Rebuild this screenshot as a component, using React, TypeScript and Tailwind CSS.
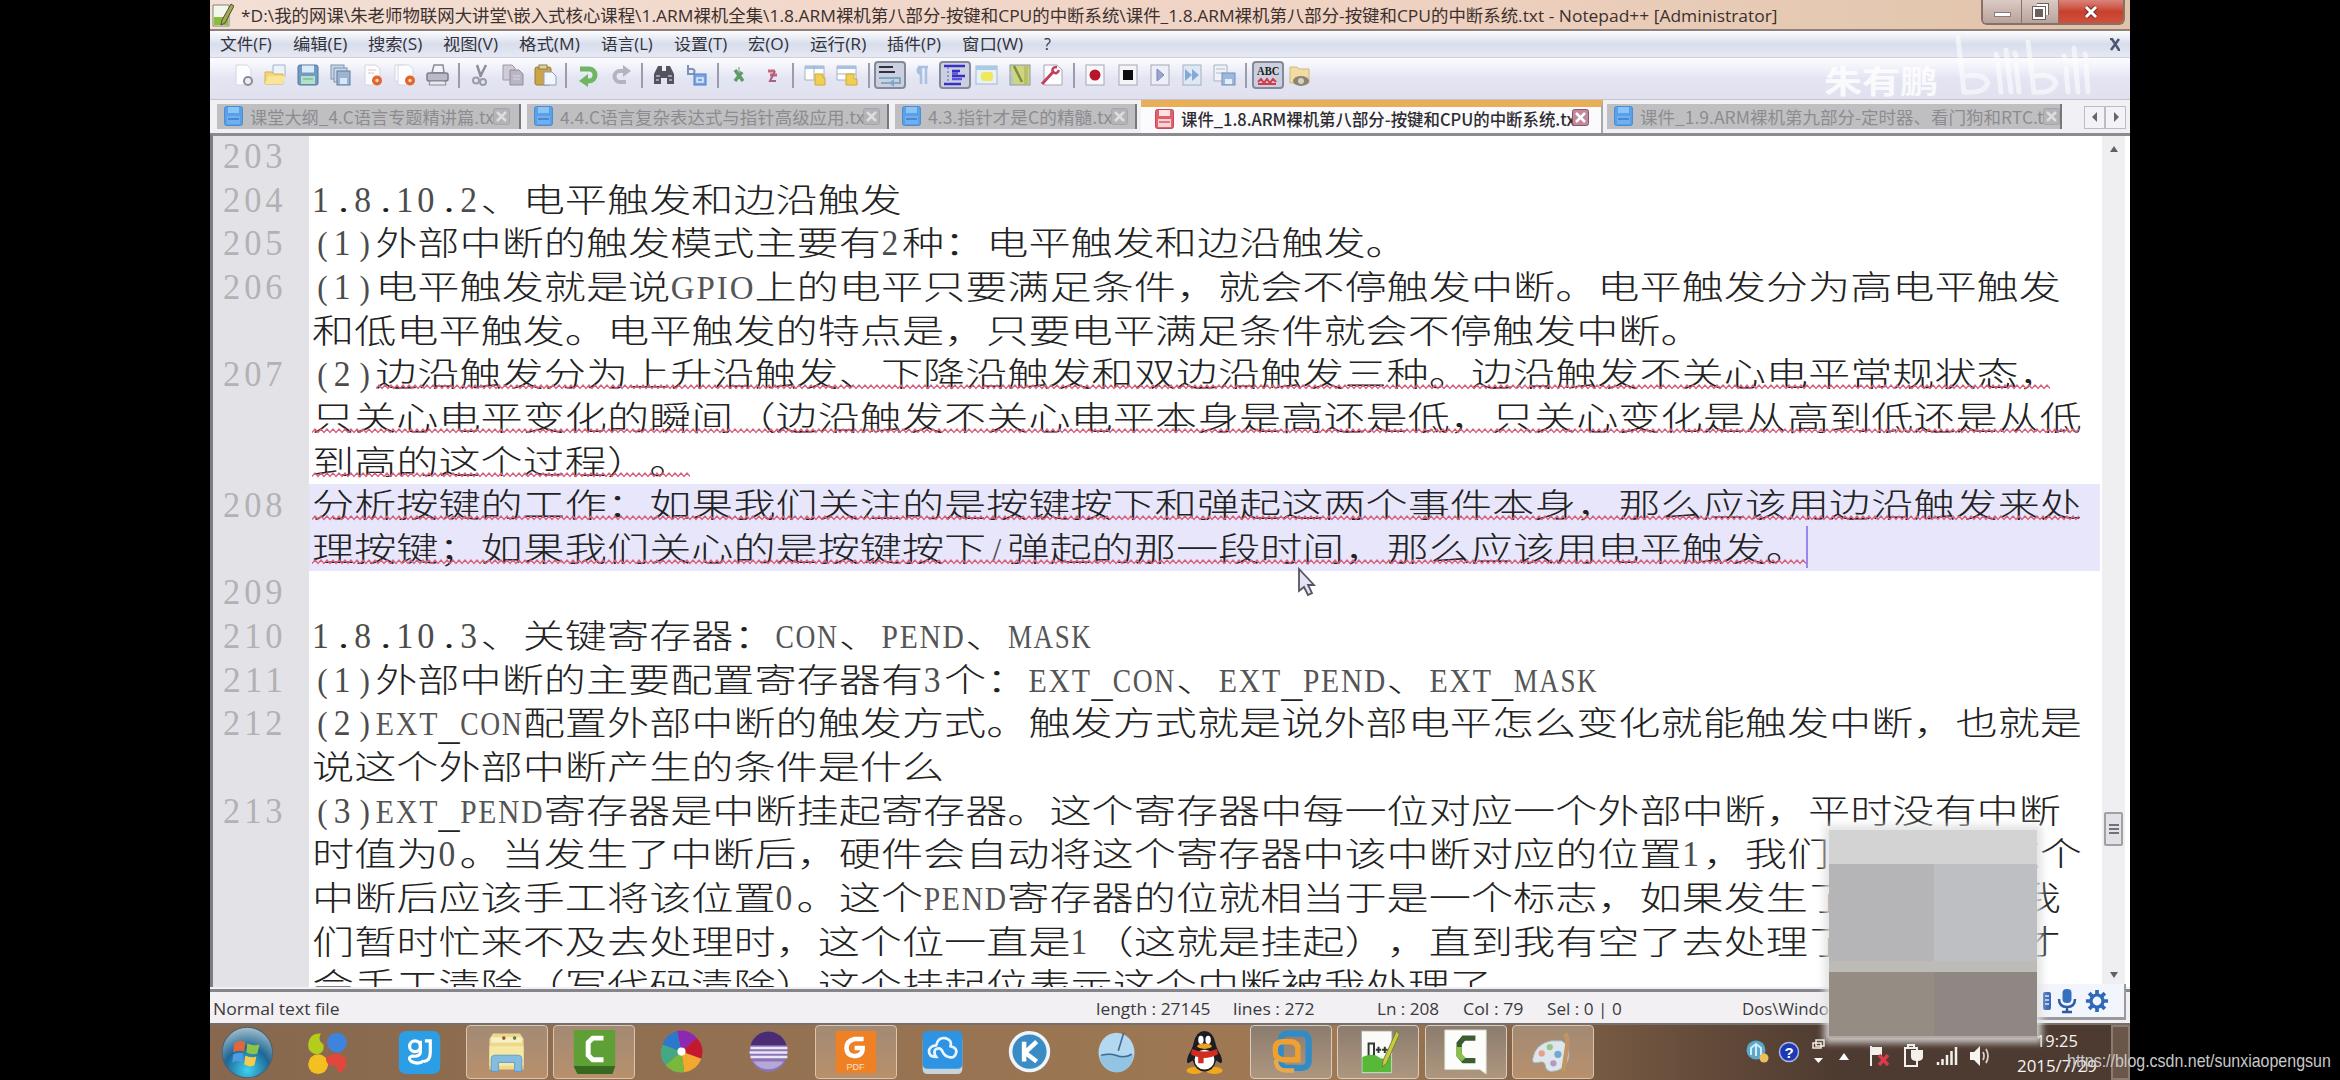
import { useLayoutEffect, useRef, type ReactNode } from "react";

/** Single-line text squeezed or stretched to an exact width. */
function Fit({ w, children, className = "" }: { w: number; children: ReactNode; className?: string }) {
  const inner = useRef<HTMLSpanElement>(null);
  useLayoutEffect(() => {
    const el = inner.current;
    if (el && el.offsetWidth) el.style.transform = `scaleX(${w / el.offsetWidth})`;
  }, [w]);
  return (
    <span className={`inline-block whitespace-nowrap ${className}`} style={{ width: w }}>
      <span ref={inner} className="inline-block origin-left whitespace-nowrap">{children}</span>
    </span>
  );
}

const HALF = 16.5;

/** Text on a fixed grid: ideographs take two cells, latin glyphs one. */
function CodeText({ text }: { text: string }) {
  const parts = text.match(/[A-Z]+|[0-9]+|[().\/_]|[^A-Z0-9().\/_]+/g) ?? [];
  return (
    <>
      {parts.map((p, i) => {
        if (/^[A-Z]+$/.test(p))
          return (
            <Fit key={i} w={HALF * p.length} className="font-['Liberation_Serif',serif] text-[34px] tracking-[2px] text-[#555]">{p}</Fit>
          );
        if (/^[0-9]+$/.test(p))
          return (
            <Fit key={i} w={HALF * p.length} className="font-['Liberation_Serif',serif] text-[35px] tracking-[4px] text-[#4c4c4c]">{p}</Fit>
          );
        if (p === "_")
          return (
            <span key={i} className="relative top-[5px] inline-block w-[16.5px] text-center font-['Liberation_Serif',serif] text-[33px]">{p}</span>
          );
        if (p === ".")
          return (
            <span key={i} className="inline-block w-[16.5px] text-center font-['Liberation_Serif',serif] text-[33px]">{p}</span>
          );
        if (/^[()\/]$/.test(p))
          return (
            <span key={i} className="inline-block w-[16.5px] scale-x-[.72] text-center font-['Liberation_Serif',serif] text-[34px] text-[#4c4c4c]">{p}</span>
          );
        return <span key={i}>{p}</span>;
      })}
    </>
  );
}

function Wave({ w }: { w: number }) {
  const pts: string[] = [];
  for (let x = 0, k = 0; x <= w; x += 3, k++) pts.push(`${x},${k % 2 ? 1 : 4.5}`);
  return (
    <svg className="absolute top-[33px] left-0 h-[6px]" width={w} height="6">
      <polyline points={pts.join(" ")} fill="none" stroke="#d4607c" strokeWidth="1.2" />
    </svg>
  );
}

type Row = { n?: number; t: string; hl?: boolean; wave?: [number, number]; caret?: number };
const rows: Row[] = [
  { n: 203, t: "" },
  { n: 204, t: "1.8.10.2、电平触发和边沿触发" },
  { n: 205, t: "(1)外部中断的触发模式主要有2种：电平触发和边沿触发。" },
  { n: 206, t: "(1)电平触发就是说GPIO上的电平只要满足条件，就会不停触发中断。电平触发分为高电平触发" },
  { t: "和低电平触发。电平触发的特点是，只要电平满足条件就会不停触发中断。" },
  { n: 207, t: "(2)边沿触发分为上升沿触发、下降沿触发和双边沿触发三种。边沿触发不关心电平常规状态，", wave: [64, 1740] },
  { t: "只关心电平变化的瞬间（边沿触发不关心电平本身是高还是低，只关心变化是从高到低还是从低", wave: [0, 1769] },
  { t: "到高的这个过程）。", wave: [0, 378] },
  { n: 208, t: "分析按键的工作：如果我们关注的是按键按下和弹起这两个事件本身，那么应该用边沿触发来处", hl: true, wave: [0, 1769] },
  { t: "理按键；如果我们关心的是按键按下/弹起的那一段时间，那么应该用电平触发。", hl: true, wave: [0, 1494], caret: 1494 },
  { n: 209, t: "" },
  { n: 210, t: "1.8.10.3、关键寄存器：CON、PEND、MASK" },
  { n: 211, t: "(1)外部中断的主要配置寄存器有3个：EXT_CON、EXT_PEND、EXT_MASK" },
  { n: 212, t: "(2)EXT_CON配置外部中断的触发方式。触发方式就是说外部电平怎么变化就能触发中断，也就是" },
  { t: "说这个外部中断产生的条件是什么" },
  { n: 213, t: "(3)EXT_PEND寄存器是中断挂起寄存器。这个寄存器中每一位对应一个外部中断，平时没有中断" },
  { t: "时值为0。当发生了中断后，硬件会自动将这个寄存器中该中断对应的位置1，我们在处理完这个" },
  { t: "中断后应该手工将该位置0。这个PEND寄存器的位就相当于是一个标志，如果发生了中断但是我" },
  { t: "们暂时忙来不及去处理时，这个位一直是1（这就是挂起），直到我有空了去处理了这个中断才" },
  { t: "会手工清除（写代码清除）这个挂起位表示这个中断被我处理了" },
];

function EditorRow({ r }: { r: Row }) {
  return (
    <div className="flex h-[43.65px] shrink-0">
      <div className="w-[96px] shrink-0 pl-[10px] leading-[43.65px] text-[#b2b2b5]">
        {r.n && <Fit w={64} className="font-['Liberation_Serif',serif] text-[35px] tracking-[4px]">{r.n}</Fit>}
      </div>
      <div className={r.hl ? "w-[1791px] bg-[#e8e6fb] pl-[3px]" : "w-[1791px] pl-[3px]"}>
        <div className="relative h-full">
          <div className="-mt-[2px] h-[43.65px] w-max origin-left scale-x-[1.277] overflow-visible whitespace-nowrap font-['Noto_Sans_CJK_SC',sans-serif] text-[33px] leading-[43.65px] font-light text-[#222] [text-spacing-trim:space-all]">
            <CodeText text={r.t} />
          </div>
          {r.wave && (
            <div className="absolute top-0" style={{ left: r.wave[0] }}>
              <Wave w={r.wave[1] - r.wave[0]} />
            </div>
          )}
          {r.caret && <div className="absolute top-0 h-[42px] w-[2px] bg-[#9a86ee]" style={{ left: r.caret }} />}
        </div>
      </div>
    </div>
  );
}

/* ---------- toolbar ---------- */
const page = <path d="M4 1h11l4 4v16H4z" fill="#fdfdff" stroke="#d4d6e0" />;
const disk = (
  <>
    <rect x="1" y="1" width="20" height="20" rx="2" fill="#6e9cc4" stroke="#52789c" />
    <rect x="5" y="1.500" width="12" height="7" fill="#dcecf6" />
    <rect x="4" y="12" width="14" height="8" fill="#b4e0c4" />
    <path d="M6 15h10" stroke="#6a9" />
  </>
);
const tools: Record<string, ReactNode> = {
  new: <>{page}<circle cx="16" cy="17" r="4" fill="#eee" stroke="#8c8c9c" strokeWidth="2" /></>,
  open: <><path d="M9 1h12v12H9z" fill="#eef3fb" stroke="#9fb4cf" /><path d="M1 8h7l2 2h9v10H1z" fill="#f0d67c" stroke="#d8b04a" /><path d="M1 20l3-8h17l-2 8z" fill="#f9e596" /></>,
  save: disk,
  saveall: <><rect x="2" y="1" width="13" height="14" fill="#c9d6e6" stroke="#7c93b0" /><rect x="5" y="4" width="13" height="14" fill="#c9d6e6" stroke="#7c93b0" /><rect x="8" y="7" width="13" height="14" fill="#9cb4d0" stroke="#5f7ca0" /><rect x="11" y="14" width="7" height="6" fill="#d8e8f4" /></>,
  close: <>{page}<path d="M7 6h8M7 9h6" stroke="#d8c8b8" /><circle cx="16" cy="16.500" r="5" fill="#e2662c" /><circle cx="16" cy="16.500" r="1.700" fill="#fbd9b8" /></>,
  closeall: <><path d="M1 1h9v16H1z" fill="#fdfdff" stroke="#d4d4e0" />{page}<circle cx="16" cy="16.500" r="5" fill="#e2662c" /><circle cx="16" cy="16.500" r="1.700" fill="#fbd9b8" /></>,
  print: <><path d="M6 9l2-8h9l1 8z" fill="#f4f4fa" stroke="#8a8a98" strokeWidth="1.500" /><rect x="1" y="9" width="21" height="8" rx="2" fill="#b9bac6" stroke="#7c7c8c" strokeWidth="1.500" /><path d="M4 17l-1 4h17l-1-4z" fill="#e8e8f0" stroke="#8a8a98" /></>,
  cut: <><path d="M8 1l4 12M17 1l-6 12" stroke="#8b8f9c" strokeWidth="2.500" /><circle cx="7" cy="16.500" r="3" fill="none" stroke="#9a9eac" strokeWidth="2" /><circle cx="14" cy="18" r="3" fill="none" stroke="#9a9eac" strokeWidth="2" /></>,
  copy: <><path d="M1 1h9l3 3v12H1z" fill="#cfcbd8" stroke="#9d99a8" /><path d="M8 6h9l4 4v11H8z" fill="#b9b5c4" stroke="#918d9c" /><path d="M11 12h7M11 15h7" stroke="#dcd8e4" /></>,
  paste: <><rect x="1" y="3" width="16" height="18" rx="2" fill="#c9a548" stroke="#9c7c2c" /><rect x="5" y="1" width="8" height="4" fill="#ddd3a0" stroke="#8c8050" /><path d="M10 8h8l4 4v9H10z" fill="#f4f6fc" stroke="#8fa0bd" /></>,
  undo: <><path d="M3 5h9a6 6 0 0 1 0 12h-2" fill="none" stroke="#6fb562" strokeWidth="5" /><path d="M11 10v13l-9-6z" fill="#6fb562" /></>,
  redo: <><path d="M17 18h-6a5.500 5.500 0 0 1 0-11h4" fill="none" stroke="#b4b4c0" strokeWidth="4" /><path d="M14 1l8 6-8 6z" fill="#b4b4c0" /></>,
  find: <><path d="M5 2h4v5h4V2h4l4 8v10h-7v-6H8v6H1V10z" fill="#53535f" /><path d="M3 12h4M15 12h4M3 16h3M16 16h3" stroke="#b9b9c6" strokeWidth="1.500" /></>,
  replace: <><path d="M3 1v9h4a2 2 0 0 0 0-5H3" fill="none" stroke="#7d93b4" strokeWidth="2" /><rect x="9" y="10" width="12" height="11" fill="#7ba4e4" stroke="#4f7cc4" /><path d="M12 14h6v4h-6z" fill="none" stroke="#dfeafa" strokeWidth="1.500" /></>,
  zin: <><path d="M7 6l8 11M14 8L7 17" stroke="#5c9c64" strokeWidth="3.500" /><path d="M11 3v5" stroke="#888" /></>,
  zout: <><path d="M7 7h7M9 11h7" stroke="#c8647c" strokeWidth="3" /><path d="M14 7L9 17h6" fill="none" stroke="#a8627a" strokeWidth="2" /></>,
  syncv: <><path d="M1 2h19v14H1z" fill="#fff" stroke="#a8b0c4" /><path d="M1 2h19v3H1z" fill="#a5c2e6" /><path d="M10 2v14" stroke="#a8b0c4" /><path d="M11 10h8v4h2v7H11z" fill="#efcf54" stroke="#cfa838" /></>,
  synch: <><path d="M1 2h19v14H1z" fill="#fff" stroke="#a8b0c4" /><path d="M1 2h19v3H1z" fill="#a5c2e6" /><path d="M1 10h19" stroke="#a8b0c4" /><path d="M10 10h8v5h3v6H10z" fill="#efcf54" stroke="#cfa838" /></>,
  wrap: <><path d="M0 3h14M0 8h16" stroke="#2f3140" strokeWidth="2" /><path d="M0 14h21v5h-6" fill="none" stroke="#7fa8c8" strokeWidth="2" /><path d="M2 19h9" stroke="#7fa8c8" strokeWidth="2" /><path d="M15 15v8l-5-4z" fill="#7fa8c8" /></>,
  para: <><path d="M9 3v17M14 3v17M6 3h10" stroke="#a9c0e2" strokeWidth="2.500" /><path d="M9 2a4.500 4.500 0 0 0 0 9z" fill="#a9c0e2" /></>,
  indent: <><path d="M0 2h21M8 7h8M8 12h13M0 20h17" stroke="#3730c8" strokeWidth="2.500" /><path d="M8 9.500h6M8 15h10" stroke="#5b52e0" strokeWidth="2.500" /><path d="M4 3v17" stroke="#5b52e0" strokeDasharray="2 2" /></>,
  lang: <><rect x="0" y="2" width="21" height="18" fill="#e8f0f8" stroke="#a5b8d0" /><path d="M0 2h21v4H0z" fill="#a9cbe8" /><rect x="5" y="8" width="12" height="9" rx="3" fill="#f0e85c" /></>,
  map: <><rect x="1" y="1" width="20" height="20" fill="#cfd57c" stroke="#8c98a4" /><path d="M5 2l8 16" stroke="#7c8c48" strokeWidth="2.500" /><path d="M17 2v18" stroke="#b8c06c" strokeWidth="4" /><path d="M4 20L2 8" stroke="#b4c4e0" strokeWidth="2" /></>,
  func: <><path d="M3 1h13l5 5v15H3z" fill="#fdfdff" stroke="#a9a3b4" /><path d="M1 20L13 7" fill="none" stroke="#c2405c" strokeWidth="3" /><path d="M16 3q-6 0-4 5 4 3 6-2" fill="none" stroke="#c2405c" strokeWidth="2.500" /></>,
  rec: <><rect x="2" y="1" width="18" height="20" fill="#f8f8fc" stroke="#a5a8b4" /><circle cx="11" cy="11" r="5.500" fill="#b8152c" /></>,
  stop: <><rect x="2" y="1" width="18" height="20" fill="#f4f4f8" stroke="#a5a8b4" /><rect x="6" y="6" width="10" height="10" fill="#0b0b12" /></>,
  play: <><rect x="2" y="1" width="18" height="20" fill="#eceef8" stroke="#a5a8b4" /><path d="M8 5l7 6-7 6z" fill="#9ea4d0" stroke="#7c84b8" /></>,
  multi: <><rect x="2" y="1" width="18" height="20" fill="#dfe9f4" stroke="#a5b0c4" /><path d="M4 5l7 6-7 6zM11 5l7 6-7 6z" fill="#86a8d8" /></>,
  msave: <><path d="M1 1h13v16H1z" fill="#f0f2fa" stroke="#a9b0c0" /><path d="M3 5h9M3 9h9" stroke="#b4bccc" /><rect x="9" y="9" width="13" height="12" fill="#9cb8dc" stroke="#7390b8" /><rect x="12" y="15" width="7" height="5" fill="#e4eef8" /></>,
  folder: <><path d="M1 3h7l2 2h10v14H1z" fill="#efdda4" stroke="#d4b878" /><ellipse cx="12" cy="17" rx="8" ry="5" fill="#8c8474" /><circle cx="12" cy="17" r="3" fill="#d8d0bc" /></>,
};
const toolOrder =
  "new open save saveall close closeall print | cut copy paste | undo redo | find replace | zin zout | syncv synch | wrap! para indent! lang map func | rec stop play multi msave | abc! folder".split(" ");

function Toolbar() {
  return (
    <div className="flex h-[41px] items-start bg-linear-to-b from-[#fdfdff] via-[#e4e5f3] to-[#e0e0ee] pt-[3px] pl-[17px]">
      {toolOrder.map((t, i) => {
        if (t === "|")
          return <div key={i} className="flex h-[28px] w-[11px] justify-center"><div className="mt-[2px] h-[25px] w-[2px] bg-[#9c9cac]" /></div>;
        const on = t.endsWith("!");
        const id = t.replace("!", "");
        return (
          <div key={i} className="flex h-[28px] w-[32.3px] justify-center">
            <div className={on ? "flex h-[28px] w-[32px] shrink-0 items-center justify-center rounded-[4px] border-2 border-[#85899c] bg-[#ccd0de]" : "flex h-[28px] w-[32px] shrink-0 items-center justify-center"}>
              {id === "abc" ? (
                <div className="flex flex-col items-center">
                  <Fit w={22} className="h-[12px] font-['Liberation_Serif',serif] text-[13px] leading-[12px] font-bold text-[#222]">ABC</Fit>
                  <svg width="22" height="8" viewBox="0 0 22 8"><path d="M1 5l3-3 3 4 3-4 3 4 3-4 3 3M1 7h18" fill="none" stroke="#d03c4c" strokeWidth="2" /></svg>
                </div>
              ) : (
                <svg width="22" height="22" viewBox="0 0 22 22" overflow="visible">{tools[id]}</svg>
              )}
            </div>
          </div>
        );
      })}
    </div>
  );
}

const menus: [string, number][] = [
  ["文件(F)", 52], ["编辑(E)", 54], ["搜索(S)", 54], ["视图(V)", 55], ["格式(M)", 61], ["语言(L)", 52],
  ["设置(T)", 53], ["宏(O)", 41], ["运行(R)", 56], ["插件(P)", 54], ["窗口(W)", 61], ["?", 7],
];

function Disk({ red = false }: { red?: boolean }) {
  return (
    <svg width="19" height="20" viewBox="0 0 19 20" className="shrink-0">
      <rect x=".5" y=".5" width="18" height="19" rx="2" fill={red ? "#e0606c" : "#5aa0e8"} stroke={red ? "#c84858" : "#4c8cd4"} />
      <rect x="4" y="1" width="11" height="6" fill={red ? "#fbe4e6" : "#8cc4f6"} />
      <rect x="3" y="10" width="13" height="8" fill={red ? "#f8d4d8" : "#70b0ee"} />
      <path d="M4 13h11" stroke={red ? "#d85868" : "#3c7cc8"} strokeWidth="1.500" />
    </svg>
  );
}

function TabClose({ active = false }: { active?: boolean }) {
  return (
    <svg width="17" height="17" viewBox="0 0 17 17" className="relative shrink-0">
      <rect x=".5" y=".5" width="16" height="16" rx="2" fill={active ? "#c08a9c" : "#b4b4b8"} stroke={active ? "#8c5468" : "#a4a4aa"} />
      <path d="M4 4l9 9M13 4l-9 9" stroke={active ? "#fff" : "#dededf"} strokeWidth="2.500" />
    </svg>
  );
}

function Tab({ w, tw, text }: { w: number; tw: number; text: string }) {
  return (
    <div className="flex h-[25px] items-center gap-[7px] overflow-hidden border-r-2 border-[#77777c] bg-[#bfbfc2] pl-[7px]" style={{ width: w }}>
      <Disk />
      <Fit w={tw} className="leading-[25px] text-[#8c8c90]">{text}</Fit>
      <div className="-ml-[14px]"><TabClose /></div>
    </div>
  );
}

function Tabs() {
  return (
    <div className="flex h-[35px] items-start border-t border-[#c4c4cc] bg-[#f1f0f5] pl-[7px] font-['Noto_Sans_CJK_SC',sans-serif] text-[17px]">
      <div className="mt-[4px]"><Tab w={304} tw={250} text="课堂大纲_4.C语言专题精讲篇.txt" /></div>
      <div className="mt-[4px] ml-[6px]"><Tab w={362} tw={310} text="4.4.C语言复杂表达式与指针高级应用.txt" /></div>
      <div className="mt-[4px] ml-[6px]"><Tab w={242} tw={190} text="4.3.指针才是C的精髓.txt" /></div>
      <div className="ml-[4px] flex h-[33px] w-[462px] items-start gap-[7px] border-t-[7px] border-r-2 border-[#e8ae58] border-r-[#a8a8ac] bg-[#fbfafc] pl-[14px]">
        <div className="mt-[2px]"><Disk red /></div>
        <Fit w={400} className="leading-[23px] font-medium text-[#2c2c30]">课件_1.8.ARM裸机第八部分-按键和CPU的中断系统.txt</Fit>
        <div className="mt-[2px] -ml-[16px]"><TabClose active /></div>
      </div>
      <div className="mt-[4px] ml-[4px]"><Tab w={455} tw={418} text="课件_1.9.ARM裸机第九部分-定时器、看门狗和RTC.txt" /></div>
      <div className="mt-[6px] ml-[22px] flex">
        {["M8 5v10l-5-5z", "M4 5v10l5-5z"].map((d) => (
          <div key={d} className="flex h-[23px] w-[21px] items-center justify-center border border-[#bcbcc4] bg-[#f3f3f7]">
            <svg width="12" height="20" viewBox="0 0 12 20"><path d={d} fill="#66666e" /></svg>
          </div>
        ))}
      </div>
    </div>
  );
}

/* ---------- taskbar ---------- */
type App = { btn?: boolean; lit?: boolean; icon: ReactNode };
const apps: App[] = [
  { icon: <g transform="translate(-1 -3) scale(1.12)"><defs><radialGradient id="orb" cx=".5" cy=".85" r=".9"><stop offset="0" stopColor="#3fd0f0" /><stop offset=".5" stopColor="#1d6796" /><stop offset="1" stopColor="#b8ccd4" /></radialGradient></defs><circle cx="25" cy="25" r="25" fill="url(#orb)" stroke="#4c6070" /><path d="M12 16q6-4 11-1l-1 9q-6-2-11 1z" fill="#e4643c" /><path d="M25 16q6 3 12 1l-2 9q-6 2-11-1z" fill="#8cc448" /><path d="M11 27q5-3 10-1l-1 9q-5-3-10 0z" fill="#4c9ce4" /><path d="M23 28q5 3 11 1l-2 9q-5 2-10-1z" fill="#f4cc4c" /></g> },
  { icon: <g transform="translate(-6 0)"><path d="M5 11q4-8 13-7-4 8 3 12 2 10-8 11Q1 24 5 11z" fill="#b4cc1c" /><circle cx="36" cy="14" r="11" fill="#3f83dc" /><circle cx="15" cy="38" r="11" fill="#f2c020" /><path d="M26 29q12-6 20 2 2 14-8 17-2-10-11-9-6-6-1-10z" fill="#e0483c" /></g> },
  { icon: <><rect x="2" y="1" width="46" height="48" rx="8" fill="#2c9ee6" /><circle cx="20" cy="18" r="6" fill="none" stroke="#fff" strokeWidth="3.500" /><path d="M31 12h6v13q0 9-7 10M26 12v13q-1 5-9 4-6 2-1 6 8 4 14-1" fill="none" stroke="#fff" strokeWidth="3.500" /></> },
  { btn: true, icon: <><path d="M6 10l4-6h30l4 6v34H6z" fill="#ecd98c" /><path d="M8 8h34v6H8z" fill="#f7efc8" /><circle cx="22" cy="9" r="2" fill="#a05030" /><circle cx="34" cy="9" r="2" fill="#608040" /><path d="M6 18h38v22H6z" fill="#f5e8a4" /><path d="M8 46V32q0-4 4-4h26q4 0 4 4v14h-8V36H16v10z" fill="#84bde0" stroke="#5c98c4" /></> },
  { btn: true, icon: <><path d="M2 0h46v40l-3 8H6l-4-6z" fill="#5ea036" /><path d="M2 40h46l-3 9H6z" fill="#376820" /><path d="M35 9H23l-5 5v14l5 5h12" fill="none" stroke="#fff" strokeWidth="5.500" /></> },
  { icon: <><g transform="translate(25 24)"><path d="M0 0L-5-23A23 23 0 0 1 17-15z" fill="#8c28b4" /><path d="M0 0L17-15A23 23 0 0 1 22 8z" fill="#c41830" /><path d="M0 0L22 8A23 23 0 0 1 3 23z" fill="#f4a830" /><path d="M0 0L3 23A23 23 0 0 1-18 15z" fill="#78b83c" /><path d="M0 0L-18 15A23 23 0 0 1-21-8z" fill="#44a884" /><path d="M0 0L-21-8A23 23 0 0 1-5-23z" fill="#2c78cc" /><circle r="4.500" fill="#fff" /></g></> },
  { icon: <><ellipse cx="25" cy="24" rx="21" ry="22.500" fill="#8c74b4" /><path d="M5 17a21 22 0 0 1 40 0z" fill="#4a2c74" /><path d="M5 20h41M4 25h42M5 30h41" stroke="#ece4f8" strokeWidth="3" /><path d="M8 35a21 21 0 0 0 34 0z" fill="#b4a8d8" /></> },
  { btn: true, icon: <><rect x="3" y="1" width="45" height="47" fill="#ef8024" /><path d="M34 10H24q-9 2-9 10t8 9q10 0 10-9h-9" fill="none" stroke="#fff" strokeWidth="5" /><text x="25" y="44" textAnchor="middle" fontSize="10" fill="#fbe0c4" fontFamily="Liberation Sans">PDF</text></> },
  { icon: <><rect x="3" y="6" width="44" height="43" rx="5" fill="#c8d4dc" /><rect x="3" y="1" width="44" height="42" rx="5" fill="#2f93e4" /><path d="M18 30q-8 0-8-6t8-7q2-9 10-8 8 2 6 9 8 2 6 8t-8 4q-5-1-7-6t-7-3q-4 3 0 9z" fill="none" stroke="#e8f4ff" strokeWidth="3" /></> },
  { icon: <><circle cx="25" cy="24" r="21" fill="#3b8cc4" stroke="#eef4f8" strokeWidth="4" /><path d="M19 13v22M33 13L20 25l13 10" fill="none" stroke="#fff" strokeWidth="5" /></> },
  { icon: <><ellipse cx="25" cy="25" rx="20" ry="22" fill="#b4d8f0" /><path d="M6 28q8-4 18-1t20 1q-3 18-19 19Q9 45 6 28z" fill="#94c4e4" /><path d="M33 3l-6 20M8 28q10-2 16 0 10 4 18-1" fill="none" stroke="#406c94" strokeWidth="1.800" /></> },
  { icon: <><ellipse cx="14" cy="45" rx="9" ry="4" fill="#f0a81c" /><ellipse cx="36" cy="45" rx="9" ry="4" fill="#f0a81c" /><path d="M7 28q5-8 6-14Q16 1 25 1t12 13q1 6 6 14 3 8 0 9l-5-3q-3 12-13 12t-13-12l-5 3q-3-1 0-9z" fill="#1d1c22" /><ellipse cx="25" cy="33" rx="11" ry="11" fill="#fff" /><ellipse cx="21" cy="11" rx="3" ry="4.500" fill="#fff" /><ellipse cx="29" cy="11" rx="3" ry="4.500" fill="#fff" /><ellipse cx="25" cy="18" rx="8" ry="3" fill="#f0a020" /><path d="M11 21q14 6 28 0l1 6q-7 4-16 4v6h-6v-7q-6-1-8-3z" fill="#d02c20" /></> },
  { btn: true, lit: true, icon: <><rect x="13" y="4" width="31" height="38" rx="7" fill="none" stroke="#2f8cc8" strokeWidth="7" /><path d="M32 16v17H15q-8-1-8-9v-3q0-8 8-8h8q9 0 9 8" fill="none" stroke="#f0a030" strokeWidth="6" /><path d="M8 33v4q2 8 10 8h10" fill="none" stroke="#e8a84c" strokeWidth="5" /></> },
  { btn: true, lit: true, icon: <><path d="M6 1h34v47H6z" fill="#fafaf8" stroke="#9c9c98" /><path d="M7 30q12-5 18 0t14-3v20H7z" fill="#58b838" /><path d="M45 1l3 4-14 32-5 4 1-7z" fill="#c8cc3c" stroke="#707840" /><path d="M14 28V15h6v13M22 22h6M25 18.500v7M29 22h6M32 18.500v7" fill="none" stroke="#303830" strokeWidth="2.200" /></> },
  { btn: true, lit: true, icon: <><path d="M2 0h46v49l-7-5H2z" fill="#fcfdfa" stroke="#d0d8c8" /><path d="M36 9H23l-5 6v13l5 6h13" fill="none" stroke="#3c5c34" strokeWidth="6" /><path d="M18 19v9l5 5" fill="none" stroke="#88c048" strokeWidth="6" /></> },
  { btn: true, icon: <><path d="M24 12q-18 3-21 20-1 6 6 4t8 3q0 6 6 7 16 0 20-15 2-14-8-19z" fill="#dce6ec" stroke="#a4b4bc" /><circle cx="13" cy="26" r="3.500" fill="#e4a088" /><circle cx="22" cy="19" r="3.500" fill="#98c888" /><circle cx="31" cy="27" r="4" fill="#74a8d4" /><circle cx="26" cy="37" r="3.500" fill="#b898c0" /><path d="M39 4q4 6 2 16l-4 26" fill="none" stroke="#c09464" strokeWidth="5" /></> },
];

function Taskbar() {
  return (
    <div className="flex h-[58px] border-t-2 border-[#75706c] bg-linear-to-r from-[#87684e] via-[#a17a54] via-60% to-[#4d3a30] to-85%">
      <div className="-ml-[8px] flex">
        {apps.map((a, i) => (
          <div key={i} className="flex w-[87.15px] items-center justify-center">
            <div
              className={
                a.btn
                  ? a.lit
                    ? "flex h-[54px] w-[82px] items-center justify-center rounded-[4px] border border-[#d8ccc0] bg-linear-to-b from-[#8c7c6e] to-[#ae967e]"
                    : "flex h-[54px] w-[82px] items-center justify-center rounded-[4px] border border-[#dcc4ac] bg-linear-to-b from-[#a28a74] to-[#b8906c]"
                  : "flex h-[54px] w-[74px] items-center justify-center"
              }
            >
              <svg width="45" height="45" viewBox="0 0 50 50" overflow="visible" className="mt-px">{a.icon}</svg>
            </div>
          </div>
        ))}
      </div>
      <div className="flex flex-1 items-center pl-[149px]">
        <svg width="24" height="24" viewBox="0 0 24 24"><circle cx="11" cy="10" r="9.500" fill="#58a8d0" /><path d="M6 15V8l5-4 5 4v7M11 4v12" stroke="#d4ecf8" strokeWidth="2" fill="none" /><circle cx="19" cy="18" r="4.500" fill="#ecc05c" /></svg>
        <svg width="22" height="24" viewBox="0 0 22 24" className="ml-[9px]"><circle cx="11" cy="12" r="9.500" fill="#1c38b4" stroke="#a8b8ec" strokeWidth="1.500" /><text x="11" y="17.500" textAnchor="middle" fontSize="15" fontWeight="700" fill="#fff" fontFamily="Liberation Sans">?</text></svg>
        <svg width="14" height="28" viewBox="0 0 14 28" className="ml-[12px]"><path d="M4 2h8v6H4zM1 5h8v5H1z" fill="none" stroke="#f4ece4" strokeWidth="1.500" /><path d="M2 20h9l-4.500 5z" fill="#fff" /></svg>
        <svg width="12" height="10" viewBox="0 0 12 10" className="mt-[8px] ml-[12px]"><path d="M1 9h10L6 2z" fill="#fff" /></svg>
        <svg width="24" height="24" viewBox="0 0 24 24" className="mt-[8px] ml-[18px]"><path d="M3 2v20" stroke="#eee" strokeWidth="2" /><path d="M4 3h10v8H4z" fill="#f4f0ec" /><path d="M11 11l9 10M20 11l-9 10" stroke="#d83c48" strokeWidth="3.500" /></svg>
        <svg width="22" height="24" viewBox="0 0 22 24" className="mt-[8px] ml-[10px]"><path d="M3 4h12v18H3zM6 1h6v3H6z" fill="none" stroke="#f4f0ec" strokeWidth="2" /><path d="M10 7h10v6q0 3-5 3t-5-3zM15 15v7" fill="#f4f0ec" stroke="#f4f0ec" strokeWidth="2" /></svg>
        <svg width="22" height="20" viewBox="0 0 22 20" className="mt-[8px] ml-[12px]"><path d="M2 16v3M6.500 13v6M11 9v10M15.500 5v14M20 1v18" stroke="#f4f0ec" strokeWidth="2.500" /></svg>
        <svg width="22" height="22" viewBox="0 0 22 22" className="mt-[8px] ml-[11px]"><path d="M1 7h4l6-6v20l-6-6H1z" fill="#f8f4f0" /><path d="M14 7q2 4 0 8M17 4q4 7 0 14" fill="none" stroke="#d8d0c8" strokeWidth="1.800" /></svg>
        <div className="ml-[26px] flex flex-col items-center gap-[4px] pt-[3px] font-['Open_Sans',sans-serif] text-[16px] leading-[21px] text-[#f8f4f0]">
          <Fit w={42}>19:25</Fit>
          <Fit w={80}>2015/7/29</Fit>
        </div>
        <div className="ml-auto h-full w-[19px] border-2 border-[#8c7c70] bg-[#6b574a]" />
      </div>
    </div>
  );
}

export default function App() {
  return (
    <div className="relative h-[1080px] w-[2340px] overflow-hidden bg-black">
      <div className="ml-[210px] flex h-[1080px] w-[1920px] flex-col bg-[#f1f0f4]">
        {/* title bar */}
        <div className="flex h-[31px] items-start border-b-2 border-[#8f807c] bg-linear-to-r from-[#f3dfd4] via-[#efd2c2] via-60% to-[#e0c3a8]">
          <svg width="22" height="25" viewBox="0 0 22 25" className="mt-[3px] ml-[2px]"><path d="M1 2h16v21H1z" fill="#f4f8ec" stroke="#7c8874" /><path d="M2 14h14v8H2z" fill="#8cbc3c" /><path d="M19 1l3 2-9 17-4 2 1-5z" fill="#a8a850" stroke="#50503c" /></svg>
          <Fit w={1536} className="ml-[7px] font-['Open_Sans','Noto_Sans_CJK_SC',sans-serif] text-[17px] leading-[31px] text-[#3c302e]">
            *D:\我的网课\朱老师物联网大讲堂\嵌入式核心课程\1.ARM裸机全集\1.8.ARM裸机第八部分-按键和CPU的中断系统\课件_1.8.ARM裸机第八部分-按键和CPU的中断系统.txt - Notepad++ [Administrator]
          </Fit>
          <div className="mr-[5px] ml-auto flex h-[25px] w-[144px] overflow-hidden rounded-b-[6px] border-2 border-t-0 border-[#86706a]">
            <div className="flex w-[39px] items-center justify-center border-r border-[#86706a] bg-linear-to-b from-[#dccac4] to-[#b8a29c]"><div className="mt-[6px] h-[5px] w-[17px] border border-[#8a7c78] bg-white" /></div>
            <div className="flex w-[37px] items-center justify-center border-r border-[#86706a] bg-linear-to-b from-[#dccac4] to-[#b8a29c]">
              <svg width="18" height="17" viewBox="0 0 18 17"><path d="M6 2h10v10M3 5h10v10H3zM7 9h2v2H7z" fill="none" stroke="#6c605c" strokeWidth="4" /><path d="M6 2h10v10M3 5h10v10H3z" fill="none" stroke="#fff" strokeWidth="2" /></svg>
            </div>
            <div className="flex flex-1 items-center justify-center bg-linear-to-b from-[#d8847a] via-[#c8402c] to-[#d0503c]">
              <svg width="16" height="14" viewBox="0 0 16 14"><path d="M3 2l10 10M13 2L3 12" stroke="#7c2c24" strokeWidth="5" /><path d="M3 2l10 10M13 2L3 12" stroke="#fff" strokeWidth="3" /></svg>
            </div>
          </div>
        </div>
        {/* menu bar */}
        <div className="flex h-[27px] items-center gap-[21px] border-b border-[#d0d0dc] bg-linear-to-b from-[#fdfdff] via-[#d9deec] to-[#e6e8f4] pl-[10px] font-['Open_Sans','Noto_Sans_CJK_SC',sans-serif] text-[16px] text-[#33333c]">
          {menus.map(([t, w]) => <Fit key={t} w={w} className="leading-[26px]">{t}</Fit>)}
          <svg width="12" height="13" viewBox="0 0 12 13" className="mr-[9px] ml-auto"><path d="M1 1h2l7 11h1M10 1L2 12" fill="none" stroke="#4c5872" strokeWidth="2.500" /></svg>
        </div>
        <Toolbar />
        <Tabs />
        {/* editor */}
        <div className="flex h-[854px] border-t-[3px] border-l-[3px] border-t-[#8b8b90] border-l-[#7d7d82] bg-white">
          <div className="relative flex h-[851px] w-[1889px] flex-col overflow-hidden bg-linear-to-r from-[#e3e3e7] from-[96px] to-white to-[96px]">
            <div className="-mt-px flex flex-col">
              {rows.map((r, i) => <EditorRow key={i} r={r} />)}
            </div>
          </div>
          <div className="flex w-[23px] flex-col items-center bg-[#efeff1]">
            <svg width="12" height="8" viewBox="0 0 12 8" className="mt-[9px]"><path d="M2 7h8L6 1z" fill="#606066" /></svg>
            <div className="mt-[659px] flex h-[34px] w-[19px] flex-col items-center justify-center gap-[2px] rounded-[2px] border-2 border-[#a0a0a6] bg-[#e2e2e6]">
              <div className="h-[2px] w-[10px] bg-[#707078]" /><div className="h-[2px] w-[10px] bg-[#707078]" /><div className="h-[2px] w-[10px] bg-[#707078]" />
            </div>
            <svg width="12" height="8" viewBox="0 0 12 8" className="mt-auto mb-[8px]"><path d="M2 1h8L6 7z" fill="#606066" /></svg>
          </div>
        </div>
        {/* status bar */}
        <div className="mt-[2px] flex h-[34px] items-center border-t-[3px] border-[#85858a] bg-[#f2f0f2] pt-[4px] pl-[3px] font-['Open_Sans',sans-serif] text-[16px] leading-[26px] text-[#3a3a3e]">
          <Fit w={126}>Normal text file</Fit>
          <Fit w={114} className="ml-[757px]">length : 27145</Fit>
          <Fit w={81} className="ml-[23px]">lines : 272</Fit>
          <Fit w={62} className="ml-[63px]">Ln : 208</Fit>
          <Fit w={61} className="ml-[24px]">Col : 79</Fit>
          <Fit w={75} className="ml-[23px]">Sel : 0 | 0</Fit>
          <Fit w={108} className="ml-[120px]">Dos\Windows</Fit>
        </div>
        <Taskbar />
      </div>

      {/* presenter watermark */}
      <div className="absolute top-[57px] left-[1824px] text-white/80">
        <Fit w={114} className="font-['Noto_Sans_CJK_SC',sans-serif] text-[32px] leading-[44px] font-bold">朱有鹏</Fit>
      </div>
      <svg className="absolute top-[34px] left-[1952px]" width="150" height="66" viewBox="0 0 150 66">
        <g fill="none" stroke="#fff" strokeOpacity=".55" strokeWidth="5" strokeLinecap="round">
          <path d="M6 4l6 54q20 2 24-9-4-10-22-7M46 30l3 28M54 16l5 42M64 30l3 28" />
          <path d="M76 8l6 50q18 2 22-9-4-10-20-7M114 34l2 24M122 14l4 44M134 32l2 26" />
          <path d="M44 20l1 3M63 19l1 3M112 22l1 3M133 20l1 3" />
        </g>
      </svg>

      {/* mouse pointer */}
      <svg className="absolute top-[567px] left-[1297px]" width="20" height="30" viewBox="0 0 20 30">
        <path d="M2 2v22l5-4 4 8 4-2-4-8h6z" fill="#e4e2f4" stroke="#55555f" strokeWidth="1.800" />
      </svg>

      {/* floating input-method buttons */}
      <div className="absolute top-[984px] left-[2036px] flex h-[36px] w-[90px] items-center gap-[5px] border-r-2 border-b-[3px] border-[#9a9a9e] bg-[#f2f5fb] pl-[7px]">
        <svg width="9" height="20" viewBox="0 0 9 20"><rect width="8" height="18" y="1" rx="2" fill="#3c68b8" /><path d="M2 5h4M2 9h4M2 13h4" stroke="#e0eafa" strokeWidth="1.500" /></svg>
        <svg width="20" height="26" viewBox="0 0 20 26"><rect x="5.500" y="1" width="9" height="14" rx="4" fill="#3470c0" /><path d="M2 11q0 8 8 8t8-8M10 19v5M5 24h10" fill="none" stroke="#2c5ca8" strokeWidth="2.500" /></svg>
        <svg width="24" height="24" viewBox="0 0 26 26" className="ml-[3px]"><circle cx="13" cy="13" r="6.500" fill="none" stroke="#2f68b8" strokeWidth="3.500" /><path d="M13 1v5M13 20v5M1 13h5M20 13h5M4.500 4.500l3.500 3.500M18 18l3.500 3.500M21.500 4.500L18 8M8 18l-3.500 3.500" stroke="#2f68b8" strokeWidth="4" /></svg>
      </div>

      {/* pixelated block */}
      <div className="absolute top-[830px] left-[1829px] flex h-[208px] w-[208px] flex-col shadow-[0_0_7px_5px_rgba(225,225,225,0.85)]">
        <div className="h-[34px] bg-[#d3d3d4]" />
        <div className="flex h-[97px]"><div className="w-[105px] bg-[#b5b5b7]" /><div className="flex-1 bg-[#bebfc3]" /></div>
        <div className="h-[11px] bg-[#bdbbb8]" />
        <div className="flex flex-1 border-b-2 border-[#b4aaa4]"><div className="w-[105px] bg-[#958c84]" /><div className="flex-1 bg-[#8f8784]" /></div>
      </div>

      {/* page watermark */}
      <div className="absolute top-[1048px] left-[2067px] text-[#c8c8c8]">
        <Fit w={264} className="font-['Liberation_Sans',sans-serif] text-[19px] leading-[26px]">https://blog.csdn.net/sunxiaopengsun</Fit>
      </div>
    </div>
  );
}
